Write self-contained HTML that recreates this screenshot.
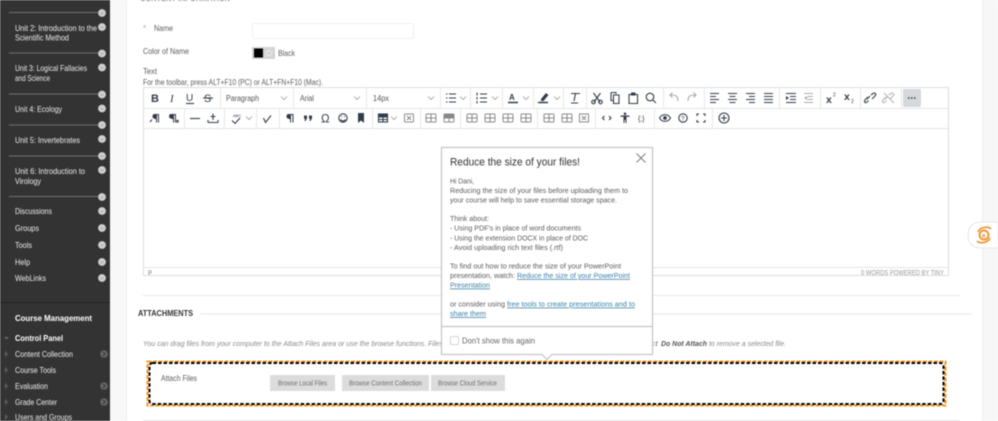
<!DOCTYPE html>
<html><head><meta charset="utf-8"><style>
html,body{margin:0;padding:0;width:998px;height:421px;overflow:hidden;background:#fff}
svg{display:block;filter:blur(.4px)}
text{font-family:"Liberation Sans",sans-serif;font-size:8px;fill:#5c5c5c}
.s text{fill:#ececec;font-size:8.2px}
.i{fill:none;stroke:#333d4a;stroke-width:1.1}
.f{fill:#333d4a;stroke:none}
.g{fill:none;stroke:#8a8a8a;stroke-width:1}
.ch{fill:none;stroke:#999;stroke-width:.8}
</style></head><body>
<svg width="998" height="421" viewBox="0 0 998 421" xmlns="http://www.w3.org/2000/svg">
<defs>
<symbol id="c" overflow="visible"><path class="ch" d="M-3-1.5 0 1.5 3-1.5"/></symbol>
<symbol id="tb" overflow="visible"><rect x="-5" y="-4" width="10" height="8" rx="1" class="g"/><path class="g" d="M-5 0H5M0-4V4"/></symbol>
<symbol id="dot" overflow="visible"><circle r="3.9" fill="#cfcfcf"/><path d="M-1.5-.5 0 1 1.5-.5" fill="none" stroke="#a0a0a0" stroke-width=".7"/></symbol>
<symbol id="gd" overflow="visible"><circle r="3.8" fill="#666"/><path d="M-1 -2 1 0-1 2" fill="none" stroke="#333" stroke-width="1"/></symbol>
<symbol id="ar" overflow="visible"><path d="M0-3 3 0 0 3Z" fill="#5f5f5f"/></symbol>
</defs>

<!-- backgrounds -->
<rect x="110" width="16" height="421" fill="#f8f8f8"/>
<rect x="126" width="1" height="421" fill="#eee"/>
<rect x="983" width="15" height="421" fill="#f7f7f7"/>
<rect x="982" width="1" height="421" fill="#eee"/>

<!-- sidebar -->
<rect width="110" height="421" fill="#333"/>
<g stroke="#858585" stroke-width=".8"><path d="M9 12.500H100M9 53H100M9 94H100M9 125H100M9 156H100M9 196.500H100"/></g>
<path d="M0 302.500H110" stroke="#222" stroke-width="1"/>
<use href="#dot" x="102" y="13"/><use href="#dot" x="102" y="27"/><use href="#dot" x="102" y="53.500"/><use href="#dot" x="102" y="67.500"/><use href="#dot" x="102" y="94.500"/><use href="#dot" x="102" y="108.500"/><use href="#dot" x="102" y="125"/><use href="#dot" x="102" y="139"/><use href="#dot" x="102" y="156"/><use href="#dot" x="102" y="170"/><use href="#dot" x="102" y="197"/><use href="#dot" x="102" y="211"/><use href="#dot" x="102" y="228"/><use href="#dot" x="102" y="245"/><use href="#dot" x="102" y="262"/><use href="#dot" x="102" y="278"/>
<g class="s">
<text x="15" y="31" textLength="82" lengthAdjust="spacingAndGlyphs">Unit 2: Introduction to the</text>
<text x="15" y="40.500" textLength="54" lengthAdjust="spacingAndGlyphs">Scientific Method</text>
<text x="15" y="71" textLength="72" lengthAdjust="spacingAndGlyphs">Unit 3: Logical Fallacies</text>
<text x="15" y="81" textLength="35" lengthAdjust="spacingAndGlyphs">and Science</text>
<text x="15" y="112" textLength="47" lengthAdjust="spacingAndGlyphs">Unit 4: Ecology</text>
<text x="15" y="143" textLength="65" lengthAdjust="spacingAndGlyphs">Unit 5: Invertebrates</text>
<text x="15" y="174" textLength="70" lengthAdjust="spacingAndGlyphs">Unit 6: Introduction to</text>
<text x="15" y="184" textLength="26" lengthAdjust="spacingAndGlyphs">Virology</text>
<text x="15" y="214" textLength="37" lengthAdjust="spacingAndGlyphs">Discussions</text>
<text x="15" y="231" textLength="24" lengthAdjust="spacingAndGlyphs">Groups</text>
<text x="15" y="248" textLength="17" lengthAdjust="spacingAndGlyphs">Tools</text>
<text x="15" y="265" textLength="15" lengthAdjust="spacingAndGlyphs">Help</text>
<text x="15" y="281" textLength="31" lengthAdjust="spacingAndGlyphs">WebLinks</text>
<text x="15" y="321" textLength="77" lengthAdjust="spacingAndGlyphs" font-weight="bold" style="fill:#fff">Course Management</text>
<text x="15" y="341" textLength="48" lengthAdjust="spacingAndGlyphs" font-weight="bold" style="fill:#fff">Control Panel</text>
<text x="15" y="357" textLength="58" lengthAdjust="spacingAndGlyphs">Content Collection</text>
<text x="15" y="373" textLength="41" lengthAdjust="spacingAndGlyphs">Course Tools</text>
<text x="15" y="389" textLength="33" lengthAdjust="spacingAndGlyphs">Evaluation</text>
<text x="15" y="405" textLength="42" lengthAdjust="spacingAndGlyphs">Grade Center</text>
<text x="15" y="420" textLength="57" lengthAdjust="spacingAndGlyphs">Users and Groups</text>
</g>
<path d="M4 337H9L6.500 339.500Z" fill="#6a6a6a"/>
<use href="#ar" x="5" y="354"/><use href="#ar" x="5" y="370"/><use href="#ar" x="5" y="386"/><use href="#ar" x="5" y="402"/><use href="#ar" x="5" y="417"/>
<use href="#gd" x="104" y="354"/><use href="#gd" x="104" y="386"/><use href="#gd" x="104" y="402"/>

<!-- form -->
<text x="140" y="1" textLength="90" lengthAdjust="spacingAndGlyphs" font-weight="bold" style="fill:#777;font-size:6.500px">CONTENT INFORMATION</text>
<text x="143" y="31" style="fill:#ec9078">*</text>
<text x="154" y="31" textLength="19" lengthAdjust="spacingAndGlyphs">Name</text>
<rect x="252.500" y="23.500" width="161" height="15" rx="1.500" fill="#fff" stroke="#efefef"/>
<text x="143" y="54" textLength="46" lengthAdjust="spacingAndGlyphs">Color of Name</text>
<rect x="252" y="47" width="23" height="12" fill="#d4d4d4"/>
<rect x="254" y="48.500" width="9" height="9" fill="#000"/>
<circle cx="269" cy="53" r="3.200" fill="#e4e4e4"/><path d="M267.500 52.500 269 54 270.500 52.500" fill="none" stroke="#aaa" stroke-width=".7"/>
<text x="278" y="56" textLength="17" lengthAdjust="spacingAndGlyphs">Black</text>
<text x="143" y="74" textLength="14" lengthAdjust="spacingAndGlyphs">Text</text>
<text x="143" y="85" textLength="180" lengthAdjust="spacingAndGlyphs">For the toolbar, press ALT+F10 (PC) or ALT+FN+F10 (Mac).</text>

<!-- editor frame -->
<rect x="143.500" y="87.500" width="805" height="188" fill="#fff" stroke="#ddd"/>
<path stroke="#e4e4e4" fill="none" d="M144 108.500H948M144 128.500H948M144 267.500H948"/>
<path stroke="#e8e8e8" fill="none" d="M220.500 88V108M293.500 88V108M366.500 88V108M440.500 88V108M470.500 88V108M502.500 88V108M533.500 88V108M563.500 88V108M586.500 88V108M663.500 88V108M704.500 88V108M779.500 88V108M820.500 88V108M860.500 88V108M901.500 88V108M184.500 109V128M224.500 109V128M256.500 109V128M279.500 109V128M372.500 109V128M420.500 109V128M460.500 109V128M537.500 109V128M595.500 109V128M654.500 109V128M712.500 109V128"/>

<!-- toolbar row 1 -->
<text x="151" y="102" font-weight="bold" style="font-size:11px;fill:#333d4a">B</text>
<text x="170" y="102" font-style="italic" style="font-family:'Liberation Serif',serif;font-size:11px;fill:#333d4a">I</text>
<text x="186" y="101" style="font-size:10px;fill:#333d4a">U</text><path class="i" d="M186 103.500H194"/>
<text x="204" y="102" style="font-size:11px;fill:#333d4a">S</text><path class="i" d="M203 98H213" stroke-width=".9"/>
<text x="226" y="101" textLength="33" lengthAdjust="spacingAndGlyphs" style="fill:#555">Paragraph</text><use href="#c" x="284" y="98"/>
<text x="300" y="101" textLength="14" lengthAdjust="spacingAndGlyphs" style="fill:#555">Arial</text><use href="#c" x="357" y="98"/>
<text x="373" y="101" textLength="16" lengthAdjust="spacingAndGlyphs" style="fill:#555">14px</text><use href="#c" x="431" y="98"/>
<path class="i" d="M449 94H456M449 98H456M449 102H456M446 94H447.500M446 98H447.500M446 102H447.500"/><use href="#c" x="463" y="98"/>
<path class="i" d="M480 94H487M480 98H487M480 102H487M477 92.500V95.500M477 97V99.500M477 101V103.500" stroke-width="1"/><use href="#c" x="495" y="98"/>
<text x="509" y="100" font-weight="bold" style="font-size:8px;fill:#333d4a">A</text><path d="M508 102.500H518" stroke="#333d4a" stroke-width="1.500"/><use href="#c" x="526" y="98"/>
<path class="f" d="M541 99 546 93 548.500 95 543.500 101H541Z"/><path d="M538 102.500H548" stroke="#333d4a" stroke-width="1.500"/><use href="#c" x="557" y="98"/>
<path class="i" d="M571 93.500H580M575.500 93.500 574 101M571 103H578"/>
<path class="i" d="M593.500 93 600 102M600.500 93 594 102"/><circle cx="593.500" cy="102" r="1.800" class="i"/><circle cx="600.500" cy="102" r="1.800" class="i"/>
<path class="i" d="M611 92.500H616V94M613.500 95H619V103.500H613.500Z M611 92.500V100.500H613"/>
<path class="i" d="M629 94.500H637.500V103.500H629Z"/><path class="f" d="M631 92.500H635.500V95.500H631Z"/>
<circle cx="650" cy="97" r="3.800" class="i"/><path class="i" d="M653 100 656 103"/>
<path d="M678 101C678 95 675 95 670 95M672.500 92.500 670 95 672.500 97.500" fill="none" stroke="#aaa" stroke-width="1.100"/>
<path d="M688 101C688 95 691 95 696 95M693.500 92.500 696 95 693.500 97.500" fill="none" stroke="#aaa" stroke-width="1.100"/>
<path class="i" d="M710 93.500H719M710 96.500H716M710 99.500H719M710 102.500H716M728 93.500H737M729.500 96.500H735.500M728 99.500H737M729.500 102.500H735.500M746 93.500H755M749 96.500H755M746 99.500H755M749 102.500H755M764 93.500H773M764 96.500H773M764 99.500H773M764 102.500H773" stroke-width="1"/>
<path class="i" d="M786 93.500H796M790 96.500H796M790 99.500H796M786 102.500H796" stroke-width="1"/><path class="f" d="M789 98 786 96V100Z"/>
<path d="M804 93.500H813M807.500 96.500H813M807.500 99.500H813M804 102.500H813" stroke="#aaa" fill="none"/><path d="M804 98 807 96V100Z" fill="#aaa"/>
<text x="826" y="103" font-weight="bold" style="font-size:10.500px;fill:#333d4a">x</text><text x="833" y="96.500" style="font-size:5px;fill:#333d4a">2</text>
<text x="844" y="100" font-weight="bold" style="font-size:10.500px;fill:#333d4a">x</text><text x="851" y="103" style="font-size:5px;fill:#333d4a">2</text>
<path class="i" d="M867 99 870 96M868.500 100.500 867 102C864.500 104 864 101 865 100L868 97M871 95 873 93.500C875.500 92 876.500 94.500 875 96L872 99"/>
<path d="M885 99 888 96M886.500 100.500 885 102C882.500 104 882 101 883 100L886 97M889 95 891 93.500C893.500 92 894.500 94.500 893 96L890 99M884 93 894 103" fill="none" stroke="#b4b4b4" stroke-width="1.100"/>
<rect x="903" y="89" width="18" height="18" rx="1.500" fill="#d6d8dc"/>
<path d="M908 98H909.500M911 98H912.500M914 98H915.500" stroke="#333d4a" stroke-width="1.500"/>

<!-- toolbar row 2 -->
<path class="f" d="M154 114H159V122.500H158V115H157V122.500H156V119C153.500 119 152.500 117.800 152.500 116.500 152.500 115 153.300 114 154 114Z"/><path class="i" d="M150 122 152 119.500"/>
<path class="f" d="M170.500 114H176V122.500H175V115H174V122.500H173V119C170.500 119 169 117.800 169 116.500 169 115 169.800 114 170.500 114Z"/><path class="i" d="M176.500 120 178.500 122.500M178.500 120 176.500 122.500" stroke-width=".8"/>
<path class="i" d="M190 118.500H200" stroke-width="1.400"/>
<path class="i" d="M208 122.500H218M208 120V122.500M218 120V122.500M213 113.500V120M210.500 116.500H215.500"/>
<path class="i" d="M232 120.500 235 123.500 240 118" stroke-width="1"/><text x="233" y="117" style="font-size:4px;fill:#333d4a">ABC</text><use href="#c" x="249" y="118"/>
<path class="i" d="M263.500 118 265.500 122.500 271 115.500" stroke-width="1.400"/>
<path class="f" d="M288 114H293.500V122.500H292.500V115H291V122.500H290V119C287.500 119 286.500 117.800 286.500 116.500 286.500 115 287.300 114 288 114Z"/>
<path class="f" d="M304 115.500H307V118.500L305.500 121H304.500L305 118.800H304ZM309 115.500H312V118.500L310.500 121H309.500L310 118.800H309Z"/>
<text x="321" y="122.500" style="font-size:11.500px;fill:#333d4a">Ω</text>
<circle cx="343" cy="118" r="4.200" class="i"/><path class="i" d="M340.500 119.500C342 121.500 344 121.500 345.500 119.500M341 116.500H342M344 116.500H345" stroke-width="1"/>
<path class="f" d="M358 113H364V123L361 120.500 358 123Z"/>
<rect x="378.500" y="114" width="9" height="8" class="i"/><path class="i" d="M378.500 117H387.500M383 114V122M378.500 119.500H387.500" stroke-width=".9"/><rect x="378.500" y="114" width="9" height="3" class="f"/><use href="#c" x="394" y="118"/>
<rect x="404.500" y="114" width="9" height="8" rx="1" class="g"/><path class="g" d="M407 116 411 120M411 116 407 120"/>
<use href="#tb" x="431" y="118"/><use href="#tb" x="449" y="118"/><rect x="444" y="114" width="10" height="4" fill="#888"/>
<use href="#tb" x="472" y="118"/><use href="#tb" x="490" y="118"/><use href="#tb" x="508" y="118"/><use href="#tb" x="526" y="118"/>
<use href="#tb" x="549" y="118"/><use href="#tb" x="567" y="118"/><rect x="579.500" y="114" width="9" height="8" class="g"/><path class="g" d="M582 116 586 120M586 116 582 120"/>
<path class="i" d="M604.500 116 602.500 118 604.500 120M609 116 611 118 609 120" stroke-width="1"/>
<circle cx="625" cy="113.800" r="1.300" class="f"/><path class="f" d="M620.500 115.500H629.500V116.800H626.500V123H625.500V120H624.500V123H623.500V116.800H620.500Z"/>
<text x="638" y="121" style="font-size:7px;fill:#333d4a">{;}</text>
<path class="i" d="M659.500 118C662 113.500 668 113.500 670.500 118 668 122.500 662 122.500 659.500 118Z"/><circle cx="665" cy="118" r="1.900" class="f"/>
<circle cx="683" cy="118" r="4.200" class="i" stroke-width="1"/><text x="681" y="120.500" style="font-size:6.500px;fill:#333d4a">?</text>
<path class="i" d="M697 116V114H699M703 114H705V116M705 120V122H703M699 122H697V120" stroke-width="1.200"/>
<circle cx="724" cy="118" r="5" class="i"/><path class="i" d="M724 115V121M721 118H727"/>

<!-- status -->
<text x="148" y="275" style="font-size:6px;fill:#777">P</text>
<text x="861" y="275" textLength="83" lengthAdjust="spacingAndGlyphs" style="font-size:7px;fill:#999">0 WORDS  POWERED BY TINY</text>

<!-- rules -->
<path d="M143 295.500H960" stroke="#e8e8e8"/>
<path d="M200 314H972" stroke="#eee" stroke-width="1.500"/>
<path d="M143 420.500H960" stroke="#e6e6e6"/>
<text x="138" y="316" textLength="55" lengthAdjust="spacingAndGlyphs" font-weight="bold" style="fill:#333;font-size:8px">ATTACHMENTS</text>

<text x="143" y="346" textLength="300" lengthAdjust="spacingAndGlyphs" font-style="italic" style="fill:#888;font-size:7.500px">You can drag files from your computer to the Attach Files area or use the browse functions. Files</text>
<text x="650" y="346" textLength="8" lengthAdjust="spacingAndGlyphs" font-style="italic" style="fill:#888;font-size:7.500px">ct</text>
<text x="661" y="346" textLength="46" lengthAdjust="spacingAndGlyphs" font-style="italic" font-weight="bold" style="fill:#555;font-size:7.500px">Do Not Attach</text>
<text x="709" y="346" textLength="77" lengthAdjust="spacingAndGlyphs" font-style="italic" style="fill:#888;font-size:7.500px">to remove a selected file.</text>

<!-- attach box -->
<rect x="147.500" y="361.500" width="798" height="44" fill="#fff" stroke="#f7941d" stroke-width="2" stroke-dasharray="4 1.500"/>
<rect x="149.500" y="363" width="794" height="41" rx="3" fill="none" stroke="#000" stroke-width="2" stroke-dasharray="3.500 2"/>
<text x="161" y="381" textLength="36" lengthAdjust="spacingAndGlyphs" style="fill:#5c5c5c">Attach Files</text>
<rect x="270" y="375" width="65" height="16" fill="#dcdcdc"/>
<rect x="342" y="375" width="87" height="16" fill="#dcdcdc"/>
<rect x="431" y="375" width="74" height="16" fill="#dcdcdc"/>
<text x="278" y="385.500" textLength="49" lengthAdjust="spacingAndGlyphs" style="font-size:7px;fill:#6e6e6e">Browse Local Files</text>
<text x="349" y="385.500" textLength="73" lengthAdjust="spacingAndGlyphs" style="font-size:7px;fill:#6e6e6e">Browse Content Collection</text>
<text x="438" y="385.500" textLength="59" lengthAdjust="spacingAndGlyphs" style="font-size:7px;fill:#6e6e6e">Browse Cloud Service</text>

<!-- popup -->
<path d="M441.500 147.500H652.500V354.500H552L547 359.500 542 354.500H441.500Z" fill="#fff" stroke="#bbb"/>
<path d="M442 326.500H652" stroke="#bbb"/>
<text x="450" y="165.500" textLength="130" lengthAdjust="spacingAndGlyphs" style="font-size:11px;fill:#333">Reduce the size of your files!</text>
<path d="M636.500 153.500 645.500 162.500M645.500 153.500 636.500 162.500" stroke="#777" fill="none" stroke-width=".9"/>
<g>
<text x="450" y="183.500" textLength="24" lengthAdjust="spacingAndGlyphs" style="font-size:7.600px">Hi Dani,</text>
<text x="450" y="193" textLength="178" lengthAdjust="spacingAndGlyphs" style="font-size:7.600px">Reducing the size of your files before uploading them to</text>
<text x="450" y="202.500" textLength="167" lengthAdjust="spacingAndGlyphs" style="font-size:7.600px">your course will help to save essential storage space.</text>
<text x="450" y="221" textLength="39" lengthAdjust="spacingAndGlyphs" style="font-size:7.600px">Think about:</text>
<text x="450" y="230.500" textLength="131" lengthAdjust="spacingAndGlyphs" style="font-size:7.600px">- Using PDF's in place of word documents</text>
<text x="450" y="240.500" textLength="138" lengthAdjust="spacingAndGlyphs" style="font-size:7.600px">- Using the extension DOCX in place of DOC</text>
<text x="450" y="250" textLength="113" lengthAdjust="spacingAndGlyphs" style="font-size:7.600px">- Avoid uploading rich text files (.rtf)</text>
<text x="450" y="268.500" textLength="171" lengthAdjust="spacingAndGlyphs" style="font-size:7.600px">To find out how to reduce the size of your PowerPoint</text>
<text x="450" y="278" textLength="65" lengthAdjust="spacingAndGlyphs" style="font-size:7.600px">presentation, watch:</text>
<text x="517" y="278" textLength="113" lengthAdjust="spacingAndGlyphs" text-decoration="underline" style="font-size:7.600px;fill:#3a80a8">Reduce the size of your PowerPoint</text>
<text x="450" y="287.500" textLength="40" lengthAdjust="spacingAndGlyphs" text-decoration="underline" style="font-size:7.600px;fill:#3a80a8">Presentation</text>
<text x="450" y="306.500" textLength="55" lengthAdjust="spacingAndGlyphs" style="font-size:7.600px">or consider using</text>
<text x="507" y="306.500" textLength="128" lengthAdjust="spacingAndGlyphs" text-decoration="underline" style="font-size:7.600px;fill:#3a80a8">free tools to create presentations and to</text>
<text x="450" y="316" textLength="36" lengthAdjust="spacingAndGlyphs" text-decoration="underline" style="font-size:7.600px;fill:#3a80a8">share them</text>
</g>
<rect x="450.500" y="336.500" width="8" height="8" rx="1" fill="#fff" stroke="#d4d4d4"/>
<text x="462" y="343.500" textLength="73" lengthAdjust="spacingAndGlyphs" style="fill:#666;font-size:8px">Don't show this again</text>

<!-- side widget -->
<path d="M998 222H981C972 222 968 228 968 235 968 242 972 248 981 248H998Z" fill="#fff" stroke="#e6e6e6"/>
<circle cx="984" cy="235" r="4.500" fill="#fff" stroke="#ef9a3c" stroke-width="2"/>
<path d="M978 232C980 227 988 226 991 229M990 238C988 243 980 244 977 241" fill="none" stroke="#ef9a3c" stroke-width="1.800"/>
<text x="982" y="237.500" font-weight="bold" style="font-size:6.500px;fill:#e8872a">e</text>
</svg>
</body></html>
